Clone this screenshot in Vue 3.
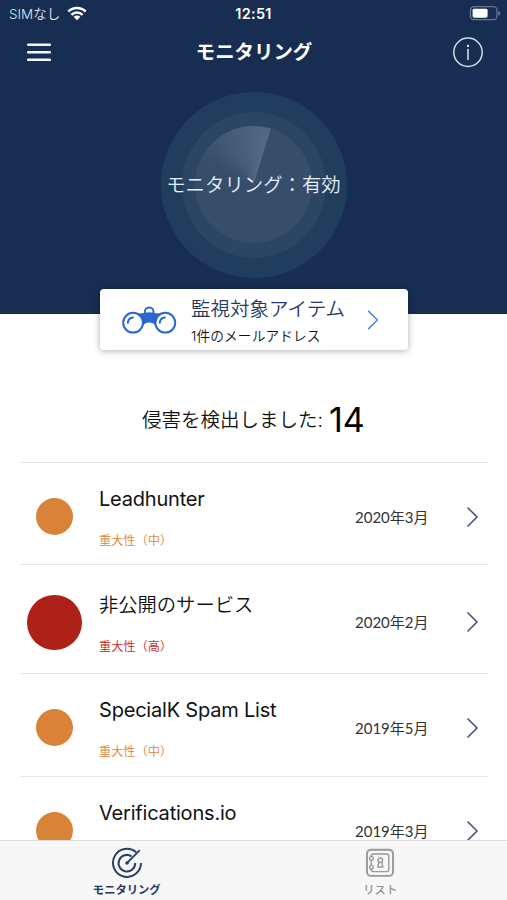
<script setup>
const breaches = [
  { name: 'Leadhunter', level: '中', date: '2020年3月' },
  { name: '非公開のサービス', level: '高', date: '2020年2月', jp: true },
  { name: 'SpecialK Spam List', level: '中', date: '2019年5月' },
  { name: 'Verifications.io', date: '2019年3月' },
]
</script>

<template>
  <div class="screen">
    <header class="hero">
      <div class="status-bar">
        <div class="carrier">
          <span class="sim">SIMなし</span>
          <svg class="wifi" width="20" height="15" viewBox="0 0 20 15">
            <g fill="none" stroke="#fff" stroke-width="2.5">
              <path d="M1.3 5.5a12.4 12.4 0 0 1 17.4 0" />
              <path d="M4.4 8.8a8 8 0 0 1 11.2 0" />
            </g>
            <path d="M6.6 10.8a4.8 4.8 0 0 1 6.8 0L10 14.3z" fill="#fff" />
          </svg>
        </div>
        <span class="clock">12:51</span>
        <svg class="battery" width="32" height="16" viewBox="0 0 32 16">
          <rect x="1.5" y="1.7" width="26.5" height="13" rx="3.5" fill="none" stroke="#68768f" stroke-width="1.3" />
          <rect x="3.6" y="3.7" width="15" height="9" rx="1.6" fill="#fff" />
          <path d="M29.3 5.7q2 .6 2 2.5t-2 2.5z" fill="#68768f" />
        </svg>
      </div>
      <div class="nav">
        <svg class="menu" width="24" height="20" viewBox="0 0 24 20">
          <path d="M1.2 2.7h21.6M1.2 10.3h21.6M1.2 17.8h21.6" stroke="#f4f8fc" stroke-width="2.6" stroke-linecap="round" />
        </svg>
        <h1 class="title">モニタリング</h1>
        <svg class="info" width="32" height="32" viewBox="0 0 32 32">
          <circle cx="16" cy="16.2" r="14.2" fill="none" stroke="#cfdded" stroke-width="1.5" />
          <path d="M16 13.5v10" stroke="#dbe7f4" stroke-width="1.5" stroke-linecap="round" />
          <circle cx="16" cy="9.9" r="1.2" fill="#dbe7f4" />
        </svg>
      </div>
      <div class="radar">
        <div class="ring">
          <div class="dial"></div>
        </div>
        <span class="radar-label">モニタリング：有効</span>
      </div>
    </header>

    <section class="card">
      <svg class="binoculars" width="56" height="30" viewBox="0 0 56 30">
        <circle cx="28.2" cy="6.8" r="4.3" fill="#fff" stroke="#2b67d1" stroke-width="2" />
        <path d="M15 8.5Q20 8.8 24 7.8Q28.2 6.5 32.4 7.8Q36.4 8.8 41.4 8.5L35.5 22Q32.5 17.6 28.2 17.6T20.9 22z" fill="#2b67d1" />
        <g fill="#fff" stroke="#2b67d1" stroke-width="2">
          <circle cx="12.1" cy="17.7" r="9.9" />
          <circle cx="44.3" cy="17.7" r="9.9" />
        </g>
        <path d="M6.8 17.8Q7.3 12.8 12 12.4M38.7 17.8Q39.2 12.8 43.9 12.4" fill="none" stroke="#2b67d1" stroke-width="2" stroke-linecap="round" />
      </svg>
      <div class="card-text">
        <span class="card-title">監視対象アイテム</span>
        <span class="card-sub">1件のメールアドレス</span>
      </div>
      <svg class="card-arrow" width="12" height="20" viewBox="0 0 12 20">
        <path d="M1.2 .9L10.3 10 1.2 19.1" fill="none" stroke="#448ad8" stroke-width="1.5" />
      </svg>
    </section>

    <div class="summary">
      <span class="summary-label">侵害を検出しました:</span>
      <span class="summary-count">14</span>
    </div>

    <main class="list">
      <article v-for="b in breaches" :key="b.name" class="row" :class="{ high: b.level === '高' }">
        <div class="dot-cell"><span class="dot"></span></div>
        <div class="details">
          <span class="name" :class="{ jp: b.jp }">{{ b.name }}</span>
          <span class="severity"><template v-if="b.level">重大性（{{ b.level }}）</template></span>
        </div>
        <span class="date">{{ b.date }}</span>
        <svg class="arrow" width="13" height="22" viewBox="0 0 13 22">
          <path d="M1.5 1.5L11 11 1.5 20.5" fill="none" stroke="#4a5680" stroke-width="1.6" />
        </svg>
      </article>
    </main>

    <nav class="tabs">
      <div class="tab active">
        <svg width="32" height="32" viewBox="0 0 32 32">
          <g fill="none" stroke="#2c3f63" stroke-width="2">
            <path d="M25.2 5.3A14 14 0 1 0 30 16" />
            <path d="M20.5 9.3A8.3 8.3 0 1 0 24.2 16" />
            <path d="M16 16L28.8 3.2" stroke-width="1.8" />
          </g>
          <circle cx="16" cy="16" r="1.8" fill="#2c3f63" />
        </svg>
        <span class="tab-label">モニタリング</span>
      </div>
      <div class="tab">
        <svg width="32" height="32" viewBox="0 0 32 32">
          <g fill="none" stroke="#999" stroke-width="1.4">
            <rect x="3" y="2.7" width="26" height="26.2" rx="4" stroke-width="1.9" />
            <rect x="7.2" y="7" width="17.6" height="17.6" rx="2" />
            <circle cx="16.3" cy="13.2" r="2.3" />
            <path d="M15 15.2L13.8 20h5l-1.2-4.8" />
          </g>
          <g fill="#f7f7f7" stroke="#999" stroke-width="1.3">
            <circle cx="7.5" cy="11.2" r="1.9" />
            <circle cx="7.5" cy="20.3" r="1.9" />
          </g>
        </svg>
        <span class="tab-label">リスト</span>
      </div>
    </nav>
  </div>
</template>

<style>
body {
  margin: 0;
  background: #fff;
}
</style>

<style scoped>
.screen {
  display: flex;
  flex-direction: column;
  width: 507px;
  height: 900px;
  overflow: hidden;
  background: #fff;
  color: #111;
  font-family: Inter, "Noto Sans CJK JP", sans-serif;
}
.screen span,
.title {
  white-space: nowrap;
}
.hero {
  flex: none;
  height: 314px;
  background: #172e52;
  color: #fff;
}
.status-bar {
  display: grid;
  grid-template-columns: 1fr auto 1fr;
  align-items: center;
  height: 28px;
  padding: 0 6px 0 9px;
}
.carrier {
  display: flex;
  align-items: center;
  gap: 7px;
}
.sim {
  font-size: 13.5px;
  line-height: 20px;
  font-weight: 350;
  color: #dfe7f0;
}
.wifi {
  margin-top: -2px;
}
.clock {
  margin-right: 3px;
  font-size: 14.5px;
  line-height: 20px;
  font-weight: 600;
  letter-spacing: 0.3px;
}
.battery {
  justify-self: end;
  margin-top: -2px;
}
.nav {
  display: grid;
  grid-template-columns: 1fr auto 1fr;
  align-items: center;
  height: 48px;
  padding: 0 23px 0 27px;
}
.title {
  margin: 0 3px 0 0;
  font-size: 19.4px;
  line-height: 28px;
  font-weight: 700;
}
.info {
  justify-self: end;
}
.radar {
  display: grid;
  place-items: center;
  width: 186px;
  height: 186px;
  margin: 16px auto 0;
  border-radius: 50%;
  background: #213d5e;
}
.ring {
  grid-area: 1 / 1;
  display: grid;
  place-items: center;
  width: 144px;
  height: 146px;
  border-radius: 50%;
  background: #2b4564;
}
.dial {
  width: 117px;
  height: 117px;
  margin-top: -2px;
  border-radius: 50%;
  background: conic-gradient(from -65deg, rgba(160, 175, 205, 0) 0deg, rgba(160, 175, 205, 0.28) 82deg, rgba(160, 175, 205, 0) 82.5deg), #374e6b;
}
.radar-label {
  grid-area: 1 / 1;
  font-size: 19.4px;
  line-height: 28px;
  font-weight: 350;
  color: #e6eff9;
}
.card {
  flex: none;
  display: flex;
  align-items: center;
  box-sizing: border-box;
  width: 308px;
  height: 61px;
  margin: -25px 0 0 100px;
  padding: 0 29px 0 21px;
  border-radius: 4px;
  background: #fff;
  box-shadow: 0 1px 7px rgba(0, 0, 0, 0.32);
  z-index: 1;
}
.card-text {
  display: flex;
  flex-direction: column;
  flex: 1;
  margin-left: 14px;
  padding-top: 3px;
}
.card-title {
  font-size: 19.5px;
  line-height: 29px;
  font-weight: 350;
  color: #243c64;
}
.card-sub {
  font-size: 13.7px;
  line-height: 24px;
  font-weight: 350;
  letter-spacing: 0.1px;
}
.summary {
  flex: none;
  display: flex;
  align-items: center;
  height: 112px;
  padding-left: 142px;
  box-sizing: border-box;
  padding-top: 28px;
}
.summary-label {
  width: 187px;
  font-size: 19.5px;
  line-height: 30px;
  font-weight: 350;
}
.summary-count {
  font-size: 34px;
  line-height: 40px;
  color: #000;
}
.list {
  flex: 1;
  min-height: 0;
  overflow: hidden;
  padding: 0 19px 0 20px;
}
.row {
  display: flex;
  align-items: center;
  box-sizing: border-box;
  height: 103px;
  border-top: 1px solid #e6e6e6;
  padding: 5px 9px 0 7px;
}
.row.high {
  height: 109px;
  margin-top: -1px;
  padding-top: 6px;
}
.dot-cell {
  display: flex;
  justify-content: center;
  width: 55px;
}
.dot {
  width: 37px;
  height: 37px;
  border-radius: 50%;
  background: #d88338;
}
.high .dot {
  width: 55px;
  height: 55px;
  background: #ae2119;
}
.details {
  display: flex;
  flex-direction: column;
  flex: 1;
  gap: 18px;
  margin-left: 17px;
  padding-top: 2px;
}
.name {
  font-size: 20px;
  line-height: 28px;
  letter-spacing: -0.2px;
}
.name.jp {
  font-size: 19.3px;
  font-weight: 350;
  letter-spacing: 0;
}
.severity {
  min-height: 20px;
  font-size: 12.2px;
  line-height: 20px;
  font-weight: 350;
  color: #dc8538;
}
.high .severity {
  color: #bf2824;
}
.high .details {
  padding-top: 4px;
}
.date {
  width: 111px;
  font-family: Lato, "Noto Sans CJK JP", sans-serif;
  font-size: 15px;
  line-height: 24px;
  color: #333;
}
.tabs {
  flex: none;
  display: grid;
  grid-template-columns: 1fr 1fr;
  box-sizing: border-box;
  height: 60px;
  border-top: 1px solid #dcdcdc;
  background: #f7f7f7;
}
.tab {
  display: flex;
  flex-direction: column;
  align-items: center;
  padding-top: 6px;
  color: #929292;
}
.tab.active {
  color: #24375b;
}
.tab-label {
  margin-top: 1px;
  font-size: 11.3px;
  line-height: 20px;
  font-weight: 500;
}
.active .tab-label {
  font-weight: 700;
}
</style>
